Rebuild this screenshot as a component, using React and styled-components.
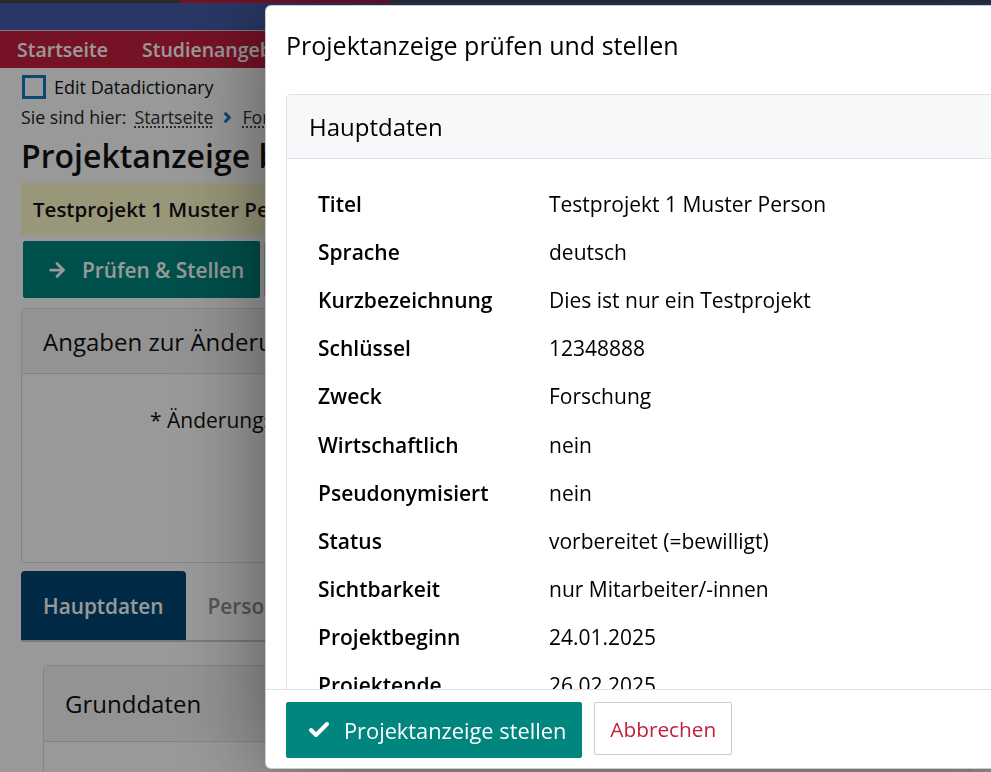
import React from 'react'
import styled, { createGlobalStyle } from 'styled-components'
import { ArrowRight, Check, ChevronRight } from 'lucide-react'

const colors = {
  teal: '#00857f',
  navy: '#445daa',
  red: '#c51e3f',
  tab: '#004673',
  link: '#127bc1',
  border: '#dee2e6',
  text: '#111',
}

const GlobalStyle = createGlobalStyle`
  html, body {
    margin: 0;
    padding: 0;
    overflow: hidden;
    background: #fff;
    font-family: "Open Sans", "Noto Sans", sans-serif;
    color: ${colors.text};
  }
  * { box-sizing: border-box; }
`

/* ---------- background page ---------- */

const Page = styled.div`
  width: 991px;
  height: 772px;
  background: #fff;
  overflow: hidden;
`

const TopStrip = styled.div`
  height: 3px;
  background: linear-gradient(to right, #444 0 179px, ${colors.red} 179px 390px, #4b5570 390px);
`

const Brand = styled.div`
  height: 28px;
  background: ${colors.navy};
  border-bottom: 1px solid #ccc;
`

const Nav = styled.nav`
  display: flex;
  gap: 34px;
  height: 37px;
  align-items: center;
  padding-left: 17px;
  background: ${colors.red};
`

const NavItem = styled.span`
  color: #fff;
  font-size: 19.5px;
  font-weight: 600;
`

const Content = styled.div`
  padding: 4px 21px 0;
`

const EditRow = styled.label`
  display: flex;
  align-items: center;
  gap: 8px;
  height: 30px;
  padding-left: 1px;
  font-size: 18px;
`

const Box = styled.span`
  width: 24px;
  height: 24px;
  border: 3px solid ${colors.link};
`

const Crumbs = styled.div`
  display: flex;
  align-items: center;
  gap: 8px;
  height: 30px;
  font-size: 17.8px;
  color: #222;

  svg { color: ${colors.link}; margin: 0 -1px; }
`

const Crumb = styled.span`
  text-decoration: underline dotted;
  text-underline-offset: 3px;
  color: #333;
`

const Title = styled.h1`
  margin: 1px 0 0;
  font-size: 32px;
  font-weight: 600;
  line-height: 46px;
  white-space: nowrap;
`

const Notice = styled.div`
  margin-top: 4px;
  height: 52px;
  display: flex;
  align-items: center;
  padding-left: 12px;
  background: #fffccb;
  font-size: 20.5px;
  font-weight: 600;
  white-space: nowrap;
`

const Actions = styled.div`
  display: flex;
  gap: 4px;
  margin: 6px 0 0 2px;
`

const PageButton = styled.button`
  display: flex;
  align-items: center;
  gap: 14px;
  height: 57px;
  padding: 0 ${p => (p.$primary ? '15px' : '40px')} 0 22px;
  border: 1px solid ${p => (p.$primary ? colors.teal : '#ccc')};
  border-radius: 2px;
  background: ${p => (p.$primary ? colors.teal : '#fff')};
  color: #fff;
  font: 600 20.8px "Open Sans", sans-serif;
`

const PageCard = styled.section`
  margin: ${p => (p.$inset ? '23px 0 0 22px' : '10px 0 0')};
  height: ${p => p.$height}px;
  border: 1px solid #ddd;
  border-radius: 4px;
  overflow: hidden;
`

const PageCardHead = styled.div`
  height: ${p => p.$height}px;
  display: flex;
  align-items: center;
  padding-left: 21px;
  background: #f5f5f5;
  border-bottom: 1px solid #ddd;
  font-size: 24px;
  white-space: nowrap;
`

const FormRow = styled.div`
  padding: 32px 0 0 128px;
  font-size: 21px;
  white-space: nowrap;
`

const Tabs = styled.div`
  display: flex;
  margin-top: 8px;
  border-bottom: 2px solid #ccc;
`

const Tab = styled.div`
  height: 69px;
  display: flex;
  align-items: center;
  padding: 0 22px;
  border-radius: 4px 4px 0 0;
  background: ${p => (p.$active ? colors.tab : 'transparent')};
  color: ${p => (p.$active ? '#fff' : '#8e8e8e')};
  font-size: 20.8px;
  font-weight: 600;
`

/* ---------- modal ---------- */

const Backdrop = styled.div`
  position: fixed;
  inset: 0;
  background: rgba(0, 0, 0, 0.4);
`

const Dialog = styled.div`
  position: fixed;
  left: 265px;
  top: 5px;
  width: 760px;
  height: 764px;
  display: flex;
  flex-direction: column;
  background: #fff;
  border: 1px solid rgba(0, 0, 0, 0.2);
  border-radius: 6px;
  box-shadow: 0 0 90px rgba(0, 0, 0, 0.45);
  overflow: hidden;
`

const DialogHead = styled.div`
  padding: 23px 20px 0;
`

const DialogTitle = styled.h2`
  margin: 0;
  font-size: 25px;
  font-weight: 500;
  line-height: 33px;
  color: #000;
`

const DialogBody = styled.div`
  flex: 1;
  overflow: hidden;
  padding: 32px 20px 0;
`

const Card = styled.div`
  border: 1px solid ${colors.border};
  border-radius: 4px 0 0 0;
`

const CardHead = styled.div`
  padding: 15px 22px;
  background: #f7f8fa;
  border-bottom: 1px solid ${colors.border};
  font-size: 24px;
  font-weight: 500;
  line-height: 33px;
  color: #000;
`

const DataList = styled.dl`
  display: grid;
  grid-template-columns: 231px 1fr;
  margin: 0;
  padding: 21px 31px;
  font-size: 21px;
  line-height: 29px;
  color: #000;
`

const Term = styled.dt`
  padding: 9.6px 0;
  font-weight: 600;
`

const Value = styled.dd`
  margin: 0;
  padding: 9.6px 0;
`

const DialogFoot = styled.div`
  display: flex;
  gap: 12px;
  height: 79px;
  padding: 12px 20px 0;
  border-top: 1px solid ${colors.border};
`

const FootButton = styled.button`
  display: flex;
  align-items: center;
  gap: 13px;
  height: ${p => (p.$primary ? 56 : 53)}px;
  padding: ${p => (p.$primary ? '0 15px 0 20px' : '0 15px')};
  border: 1px solid ${p => (p.$primary ? colors.teal : '#ccc')};
  border-radius: 2px;
  background: ${p => (p.$primary ? colors.teal : '#fff')};
  color: ${p => (p.$primary ? '#fff' : '#c41e3a')};
  font: ${p => (p.$primary ? '500 21.8px' : '400 20.8px')} "Open Sans", sans-serif;
`

const details = [
  ['Titel', 'Testprojekt 1 Muster Person'],
  ['Sprache', 'deutsch'],
  ['Kurzbezeichnung', 'Dies ist nur ein Testprojekt'],
  ['Schlüssel', '12348888'],
  ['Zweck', 'Forschung'],
  ['Wirtschaftlich', 'nein'],
  ['Pseudonymisiert', 'nein'],
  ['Status', 'vorbereitet (=bewilligt)'],
  ['Sichtbarkeit', 'nur Mitarbeiter/-innen'],
  ['Projektbeginn', '24.01.2025'],
  ['Projektende', '26.02.2025'],
  ['Laufzeit', '1 Monat'],
]

const App = () => (
  <>
    <GlobalStyle />
    <Page>
      <TopStrip />
      <Brand />
      <Nav>
        <NavItem>Startseite</NavItem>
        <NavItem>Studienangebot</NavItem>
      </Nav>
      <Content>
        <EditRow>
          <Box />
          Edit Datadictionary
        </EditRow>
        <Crumbs>
          Sie sind hier:
          <Crumb>Startseite</Crumb>
          <ChevronRight size={15} strokeWidth={5} />
          <Crumb>Forschung</Crumb>
        </Crumbs>
        <Title>Projektanzeige bearbeiten</Title>
        <Notice>Testprojekt 1 Muster Person</Notice>
        <Actions>
          <PageButton $primary>
            <ArrowRight size={22} strokeWidth={3} />
            Prüfen &amp; Stellen
          </PageButton>
          <PageButton>Speichern</PageButton>
        </Actions>
        <PageCard $height={255}>
          <PageCardHead $height={65}>Angaben zur Änderung</PageCardHead>
          <FormRow>* Änderungsgrund</FormRow>
        </PageCard>
        <Tabs>
          <Tab $active>Hauptdaten</Tab>
          <Tab>Personen</Tab>
        </Tabs>
        <PageCard $inset $height={200}>
          <PageCardHead $height={76}>Grunddaten</PageCardHead>
        </PageCard>
      </Content>
    </Page>
    <Backdrop />
    <Dialog>
      <DialogHead>
        <DialogTitle>Projektanzeige prüfen und stellen</DialogTitle>
      </DialogHead>
      <DialogBody>
        <Card>
          <CardHead>Hauptdaten</CardHead>
          <DataList>
            {details.map(([k, v]) => (
              <React.Fragment key={k}>
                <Term>{k}</Term>
                <Value>{v}</Value>
              </React.Fragment>
            ))}
          </DataList>
        </Card>
      </DialogBody>
      <DialogFoot>
        <FootButton $primary>
          <Check size={24} strokeWidth={4} />
          Projektanzeige stellen
        </FootButton>
        <FootButton>Abbrechen</FootButton>
      </DialogFoot>
    </Dialog>
  </>
)

export default App
